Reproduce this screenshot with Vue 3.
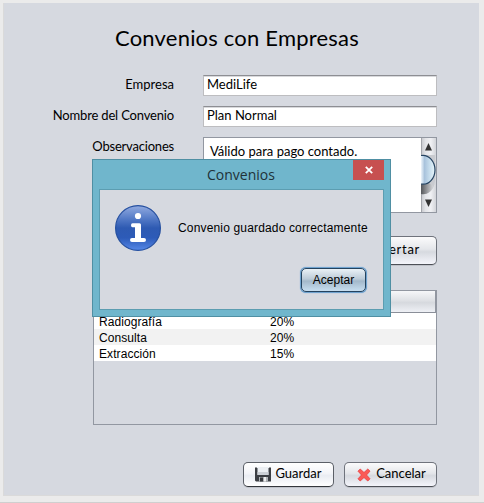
<script setup>
const rows = [
  { service: 'Radiografía', discount: '20%' },
  { service: 'Consulta', discount: '20%' },
  { service: 'Extracción', discount: '15%' },
]
</script>

<template>
  <div class="window">
    <main class="panel">
      <h1 class="title"><span>Convenios con Empresas</span></h1>

      <div class="form">
        <label class="label empresa">Empresa</label>
        <div class="field medi">MediLife</div>
        <label class="label nombre">Nombre del Convenio</label>
        <div class="field plan">Plan Normal</div>
        <label class="label observ">Observaciones</label>
        <div class="area">
          <div class="area-text">Válido para pago contado.</div>
          <svg class="scroll" width="15" height="74" viewBox="0 0 15 74">
            <defs>
              <linearGradient id="track" x1="0" x2="1" y1="0" y2="0">
                <stop offset="0" stop-color="#c3c5ca" />
                <stop offset=".3" stop-color="#e3e4e8" />
                <stop offset=".65" stop-color="#f0f1f4" />
                <stop offset="1" stop-color="#d2d4d9" />
              </linearGradient>
              <linearGradient id="thumb" x1="0" x2="1" y1="0" y2="0">
                <stop offset="0" stop-color="#eef5fb" />
                <stop offset=".25" stop-color="#a9c3dc" />
                <stop offset=".6" stop-color="#c5dcec" />
                <stop offset="1" stop-color="#e8f6fb" />
              </linearGradient>
              <linearGradient id="shade" x1="0" x2="1" y1="0" y2="0">
                <stop offset="0" stop-color="#55575b" />
                <stop offset="1" stop-color="#d6d7da" />
              </linearGradient>
            </defs>
            <rect width="15" height="74" fill="url(#track)" />
            <rect width="1" height="74" fill="#a3a5ab" />
            <path d="M0 17V56C7 57 13 53 14 43V17Z" fill="#c9cbd0" />
            <path d="M0 46V56C6 57 10 54 12 48L8 45Z" fill="url(#shade)" />
            <path d="M0 17.500C8 16 14 24 14 32S8 47.500 0 46Z" fill="url(#thumb)" />
            <path d="M0 17.500C8 16 14 24 14 32S8 47.500 0 46" fill="none" stroke="#264462" stroke-width="1.200" />
            <path d="M4 12.500H11L7.500 5Z" fill="#333" />
            <path d="M4 61.500H11L7.500 69Z" fill="#333" />
          </svg>
        </div>
      </div>

      <div class="insert-row">
        <button class="btn insert">Insertar</button>
      </div>

      <div class="table">
        <div class="thead"></div>
        <div v-for="row in rows" :key="row.service" class="row">
          <span>{{ row.service }}</span>
          <span>{{ row.discount }}</span>
        </div>
      </div>

      <div class="actions">
        <button class="btn save">
          <svg width="16" height="15" viewBox="0 0 16 15">
            <path d="M0 .5H2V1H14V.5H16V14.500H1L0 13.500Z" fill="#3c3f44" />
            <rect x="2.500" y="0" width="11" height="8" fill="#eceff3" />
            <rect x="2.500" y="5" width="11" height="3" fill="#ccd0d6" />
            <rect x="4" y="10" width="9" height="4.500" fill="#aeb2b6" />
            <rect x="5" y="10.500" width="3" height="4" fill="#37393d" />
            <rect x="9" y="10" width="2" height="4.500" fill="#eee" />
          </svg>
          <span>Guardar</span>
        </button>
        <button class="btn cancel">
          <svg width="14" height="14" viewBox="0 0 14 14">
            <path d="M3.200 1L7 4.500L10.800 1L13 3.200L9.500 7L13 10.800L10.800 13L7 9.500L3.200 13L1 10.800L4.500 7L1 3.200Z" fill="#fb5a56" stroke="#e83a3c" stroke-width=".8" stroke-linejoin="round" />
          </svg>
          <span>Cancelar</span>
        </button>
      </div>
    </main>

    <section class="dialog">
      <header class="dialog-head">
        <span class="dialog-title">Convenios</span>
        <button class="close">
          <svg width="8" height="8" viewBox="0 0 8 8">
            <path d="M.8 .8L7.200 7.200M7.200 .8L.8 7.200" stroke="#fff" stroke-width="1.800" />
          </svg>
        </button>
      </header>
      <div class="dialog-body">
        <div class="message">
          <svg class="info" width="46" height="46" viewBox="0 0 46 46">
            <defs>
              <linearGradient id="info" x1="0" x2="0" y1="0" y2="1">
                <stop offset="0" stop-color="#92abe0" />
                <stop offset=".3" stop-color="#5279c6" />
                <stop offset=".5" stop-color="#2e5ab2" />
                <stop offset=".72" stop-color="#2d5bb8" />
                <stop offset="1" stop-color="#5688e8" />
              </linearGradient>
            </defs>
            <circle cx="23" cy="23" r="22.400" fill="url(#info)" stroke="#2650a0" stroke-width="1.200" />
            <circle cx="23" cy="11" r="3.100" fill="#fff" />
            <path d="M17.500 18.200H24.500Q26 18.200 26 19.700V33H29Q31 33 31 35T29 37H17Q15 37 15 35T17 33H20V22.200H17.500Q16 22.200 16 20.200T17.500 18.200Z" fill="#fff" />
          </svg>
          <span>Convenio guardado correctamente</span>
        </div>
        <button class="btn accept">Aceptar</button>
      </div>
    </section>
  </div>
</template>

<style>
body { background: #ebebeb; }
</style>

<style scoped>
* { box-sizing: border-box; }
.window {
  position: relative;
  width: 484px;
  height: 503px;
  padding: 3px 5px 6px 3px;
  background: #ebebeb;
  border-bottom: 1px solid #cfcfcf;
  font-family: Lato, sans-serif;
  font-size: 13px;
  color: #000;
  overflow: hidden;
}
.panel {
  width: 476px;
  height: 493px;
  padding: 19px 42px 0 0;
  background: #d6d9e0;
  border: 1px solid #dadada;
  border-right: 0;
  border-top: 0;
}
.title {
  margin: 0;
  height: 32px;
  padding-left: 111px;
  font-size: 22px;
  font-weight: 400;
  line-height: 32px;
  letter-spacing: .2px;
  white-space: nowrap;
}
.form {
  display: grid;
  grid-template-columns: 170px 234px;
  grid-template-rows: 21px 21px 76px;
  column-gap: 29px;
  row-gap: 10px;
  margin-top: 21px;
}
.label {
  text-align: right;
  line-height: 18px;
  white-space: nowrap;
}
.nombre { letter-spacing: -.17px; }
.observ { letter-spacing: -.2px; }
.field {
  height: 21px;
  padding-left: 3px;
  line-height: 17px;
  background: #fff;
  border: 1px solid #bdbdc0;
  border-top-color: #8d8e93;
  box-shadow: inset 0 1px #d8d9dc;
}
.area {
  display: flex;
  justify-content: space-between;
  background: #fff;
  border: 1px solid #9297a1;
  height: 76px;
}
.area-text {
  padding: 4px 0 0 6px;
  line-height: 18px;
  white-space: nowrap;
}
.insert-row {
  display: flex;
  justify-content: flex-end;
  margin-top: 23px;
}
.btn {
  display: flex;
  align-items: center;
  justify-content: center;
  margin: 0;
  padding: 0;
  height: 25px;
  border: 1px solid #6f737c;
  border-bottom-color: #4d5057;
  border-radius: 5px;
  background: linear-gradient(#fbfbfc, #e4e6ea 45%, #d6d9df 55%, #f4f5fb);
  box-shadow: 0 1px #bfc2c9;
  font: 13px Lato, sans-serif;
  color: #000;
}
.insert {
  justify-content: flex-end;
  width: 92px;
  height: 29px;
  padding: 0 16px 3px 0;
  letter-spacing: .7px;
}
.table {
  width: 344px;
  height: 135px;
  margin: 25px 0 0 89px;
  border: 1px solid #9297a1;
  font: 12px "Liberation Sans", sans-serif;
}
.thead {
  height: 22px;
  background: linear-gradient(#f6f7f9, #dfe1e5 45%, #d6d9de 55%, #eef0f5);
  border-right: 1px solid #9297a1;
  border-bottom: 1px solid #8a8e98;
}
.row {
  display: grid;
  grid-template-columns: 171px 171px;
  height: 16px;
  padding-left: 5px;
  line-height: 18px;
  letter-spacing: .08px;
  background: #fff;
}
.row:nth-child(odd) { background: #f2f2f2; }
.actions {
  display: flex;
  justify-content: flex-end;
  gap: 10px;
  margin-top: 37px;
}
.actions .btn span { padding-bottom: 3px; }
.save {
  width: 91px;
  gap: 4px;
  background: linear-gradient(#fff, #f3f4f8 45%, #e9ecf2 55%, #fff);
  border-color: #5b5f67;
  border-bottom-color: #33363b;
}
.cancel {
  width: 93px;
  gap: 5px;
  padding-left: 2px;
}
.dialog {
  position: absolute;
  left: 92px;
  top: 159px;
  width: 299px;
  height: 158px;
  padding: 0 6px 6px;
  background: #70b6cc;
  border: 1px solid #4f8fa3;
}
.dialog-head {
  display: grid;
  grid-template-columns: 1fr 31px;
  height: 29px;
}
.dialog-title {
  padding-left: 108px;
  font: 14px "Open Sans", sans-serif;
  line-height: 29px;
  color: #203238;
}
.close {
  display: flex;
  align-items: center;
  justify-content: center;
  width: 31px;
  height: 20px;
  padding: 0;
  border: 0;
  background: #c75050;
}
.dialog-body {
  display: flex;
  flex-direction: column;
  height: 121px;
  padding: 15px 17px 0 15px;
  background: #d6d9e0;
  border: 1px solid #5c9db1;
  font: 12px "Liberation Sans", sans-serif;
}
.message {
  display: flex;
  align-items: center;
  gap: 17px;
  height: 46px;
  white-space: nowrap;
  letter-spacing: .16px;
}
.info { flex: none; }
.accept {
  align-self: flex-end;
  width: 65px;
  height: 24px;
  margin-top: 17px;
  border-color: #24435f;
  background: linear-gradient(#eaf1f6, #bccbd8 45%, #a3b8ca 55%, #c7def0);
  box-shadow: 0 0 0 1px #70a3cf, 0 0 1px 1px #70a3cf;
  font: 12px "Liberation Sans", sans-serif;
}
</style>
